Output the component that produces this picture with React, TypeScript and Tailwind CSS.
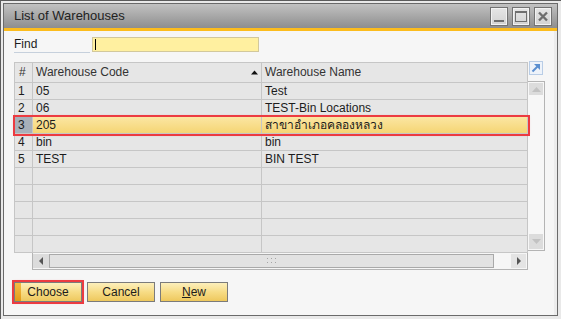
import React from "react";

const rows = [
  { n: "1", code: "05", name: "Test" },
  { n: "2", code: "06", name: "TEST-Bin Locations" },
  { n: "3", code: "205", name: "สาขาอำเภอคลองหลวง", selected: true },
  { n: "4", code: "bin", name: "bin" },
  { n: "5", code: "TEST", name: "BIN TEST" },
  { n: "", code: "", name: "" },
  { n: "", code: "", name: "" },
  { n: "", code: "", name: "" },
  { n: "", code: "", name: "" },
  { n: "", code: "", name: "" },
];

function TitleButtons() {
  return (
    <div className="flex gap-[4px] mr-[5px]">
      <div className="w-[18px] h-[19px] border border-[#737373] bg-linear-to-b from-[#e6e6e6] to-[#d2d2d2] shadow-[inset_0_0_0_1px_#f2f2f2]">
        <svg width="16" height="17" viewBox="0 0 16 17">
          <rect x="3" y="12" width="10" height="2" fill="#6e6e6e" />
        </svg>
      </div>
      <div className="w-[18px] h-[19px] border border-[#737373] bg-linear-to-b from-[#e6e6e6] to-[#d2d2d2] shadow-[inset_0_0_0_1px_#f2f2f2]">
        <svg width="16" height="17" viewBox="0 0 16 17">
          <rect x="2.5" y="3.5" width="11" height="10" fill="none" stroke="#6e6e6e" />
          <rect x="2" y="3" width="12" height="2" fill="#6e6e6e" />
        </svg>
      </div>
      <div className="w-[18px] h-[19px] border border-[#737373] bg-linear-to-b from-[#e6e6e6] to-[#d2d2d2] shadow-[inset_0_0_0_1px_#f2f2f2]">
        <svg width="16" height="17" viewBox="0 0 16 17">
          <path d="M4 4.5 L12 12.5 M12 4.5 L4 12.5" stroke="#6e6e6e" strokeWidth="2.4" />
        </svg>
      </div>
    </div>
  );
}

function GridRow({ r }: any) {
  const cellBg = r.selected ? "bg-linear-to-b from-[#fbe6a2] to-[#f5d573]" : "bg-[#e6e6e6]";
  return (
    <div
      className={`flex h-[17px] border-b border-[#c6c6c6] text-[12px] leading-[16px] ${
        r.selected ? "relative z-10 outline-2 outline-[#ec3b41] shadow-[0_0_3px_rgba(236,59,65,0.6)]" : ""
      }`}
    >
      <div className={`w-[18px] border-r border-[#c6c6c6] pl-[3px] ${r.selected ? "bg-[#a7b0ba]" : "bg-[#e6e6e6]"}`}>{r.n}</div>
      <div className={`w-[229px] border-r border-[#c6c6c6] pl-[3px] ${cellBg}`}>{r.code}</div>
      <div className={`w-[266px] border-r border-[#c6c6c6] pl-[3px] ${cellBg}`}>{r.name}</div>
    </div>
  );
}

export default function App() {
  return (
    <div className="w-[561px] h-[319px] bg-[#e9e9e9] border-l border-t border-[#5c5c5c] pt-[2px] pl-[2px] pr-[3px] pb-[3px] font-['Liberation_Sans',Tahoma,sans-serif] text-[#1c1c1c]">
      <div className="h-full flex flex-col border border-[#6a6a6a]">
        <div className="h-[24px] shrink-0 flex items-center justify-between pl-[10px] bg-linear-to-b from-[#c2c2c2] to-[#8e8e8e]">
          <span className="text-[13px] text-[#222]">List of Warehouses</span>
          <TitleButtons />
        </div>
        <div className="h-[3px] shrink-0 bg-[#fcbc1d]" />

        <div className="flex-1 bg-[#f6f6f6] border-r-[3px] border-[#ececec] pl-[10px] pt-[6px]">
          <div className="flex items-start gap-[2px]">
            <div className="w-[76px] h-[16px] border-b border-[#c6d0dc] text-[12px] leading-[14px]">Find</div>
            <div className="w-[167px] h-[15px] bg-[#fff0a0] border border-[#d2c89c] flex items-center pl-[2px]">
              <div className="w-px h-[11px] bg-black" />
            </div>
          </div>

          <div className="mt-[9px] flex">
            <div className="w-[514px]">
              <div className="border-l border-[#c6c6c6]">
                <div className="flex h-[21px] border-y border-[#c6c6c6] text-[12px] leading-[19px] text-[#333]">
                  <div className="w-[18px] border-r border-[#c6c6c6] bg-[#e6e6e6] pl-[4px]">#</div>
                  <div className="w-[229px] border-r border-[#c6c6c6] bg-[#e6e6e6] pl-[3px] pr-[3px] flex items-center justify-between">
                    <span>Warehouse Code</span>
                    <svg width="7" height="5" viewBox="0 0 7 5">
                      <path d="M0 4.5 L3.5 0.5 L7 4.5 Z" fill="#111" />
                    </svg>
                  </div>
                  <div className="w-[266px] border-r border-[#c6c6c6] bg-[#e6e6e6] pl-[3px]">Warehouse Name</div>
                </div>
                {rows.map((r, i) => (
                  <GridRow key={i} r={r} />
                ))}
              </div>

              <div className="ml-[18px] h-[17px] border-x border-b border-[#b4b4b4] flex items-stretch py-px bg-[#f6f6f6]">
                <div className="w-[16px] bg-[#dcdcdc] flex items-center justify-center">
                  <svg width="4" height="8" viewBox="0 0 4 8">
                    <path d="M4 0 L0 4 L4 8 Z" fill="#555" />
                  </svg>
                </div>
                <div className="w-[445px] bg-[#e2e2e2] border border-[#a9a9a9] flex items-center justify-center">
                  <svg width="9" height="6" viewBox="0 0 9 6">
                    <g fill="#a5a5a5">
                      <rect x="0" y="0" width="1" height="1" />
                      <rect x="4" y="0" width="1" height="1" />
                      <rect x="8" y="0" width="1" height="1" />
                      <rect x="0" y="4" width="1" height="1" />
                      <rect x="4" y="4" width="1" height="1" />
                      <rect x="8" y="4" width="1" height="1" />
                    </g>
                  </svg>
                </div>
                <div className="flex-1" />
                <div className="w-[15px] mr-px bg-[#e4e4e4] flex items-center justify-center">
                  <svg width="4" height="8" viewBox="0 0 4 8">
                    <path d="M0 0 L4 4 L0 8 Z" fill="#555" />
                  </svg>
                </div>
              </div>
            </div>

            <div className="w-[17px] flex flex-col">
              <div className="h-[20px] pl-px -mt-px">
                <svg width="14" height="14" viewBox="0 0 14 14">
                  <rect x="0.5" y="0.5" width="13" height="13" fill="#eef3fa" stroke="#b9cde6" />
                  <path d="M3.5 10.5 L9.5 4.5" stroke="#5b8fd0" strokeWidth="2" />
                  <path d="M5 3 L11 3 L11 9 Z" fill="#5b8fd0" />
                </svg>
              </div>
              <div className="h-[170px] border-y border-r border-[#b4b4b4] bg-[#f7f7f7] flex flex-col justify-between px-px py-px">
                <div className="h-[12px] bg-[#dcdcdc] flex items-center justify-center">
                  <svg width="9" height="5" viewBox="0 0 9 5">
                    <path d="M0 5 L4.5 0 L9 5 Z" fill="#c2c2c2" />
                  </svg>
                </div>
                <div className="h-[15px] bg-[#dcdcdc] flex items-center justify-center">
                  <svg width="9" height="5" viewBox="0 0 9 5">
                    <path d="M0 0 L4.5 5 L9 0 Z" fill="#c2c2c2" />
                  </svg>
                </div>
              </div>
            </div>
          </div>

          <div className="mt-[12px] flex gap-[5px] text-[12px]">
            <button className="w-[68px] h-[20px] border border-[#7b7b7b] bg-linear-to-b from-[#fcefbb] via-[#f7dc85] to-[#eec85c] flex items-stretch outline-2 outline-[#ec3b41] shadow-[0_0_3px_rgba(236,59,65,0.6)]">
              <span className="w-[6px] bg-linear-to-b from-[#f3be45] to-[#e39a12]" />
              <span className="flex-1 flex items-center justify-center pr-[6px]">Choose</span>
            </button>
            <button className="w-[68px] h-[20px] border border-[#7b7b7b] bg-linear-to-b from-[#fcefbb] via-[#f7dc85] to-[#eec85c] flex items-center justify-center">
              Cancel
            </button>
            <button className="w-[68px] h-[20px] border border-[#7b7b7b] bg-linear-to-b from-[#fcefbb] via-[#f7dc85] to-[#eec85c] flex items-center justify-center">
              <span>
                <span className="underline">N</span>ew
              </span>
            </button>
          </div>
        </div>
      </div>
    </div>
  );
}
